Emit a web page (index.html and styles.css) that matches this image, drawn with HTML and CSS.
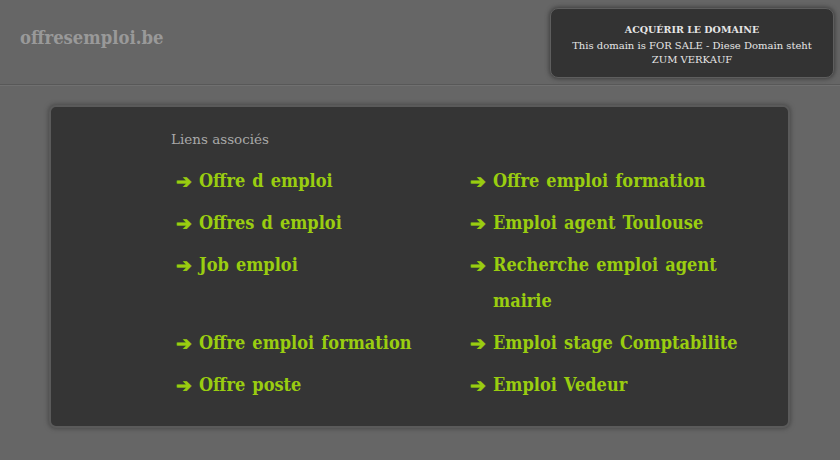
FILE: index.html
```html
<!DOCTYPE html>
<html lang="fr">
<head>
<meta charset="utf-8">
<title>offresemploi.be</title>
<link rel="stylesheet" href="styles.css">
</head>
<body>
<header class="top">
  <div class="brand">offresemploi.be</div>
  <div class="sale">
    <div class="sale-title">ACQUÉRIR LE DOMAINE</div>
    <div class="sale-text">This domain is FOR SALE - Diese Domain steht ZUM VERKAUF</div>
  </div>
</header>
<main class="panel">
  <div class="panel-title">Liens associés</div>
  <ul class="links">
    <li><span class="arr">➔</span><a href="#">Offre d emploi</a></li>
    <li><span class="arr">➔</span><a href="#">Offre emploi formation</a></li>
    <li><span class="arr">➔</span><a href="#">Offres d emploi</a></li>
    <li><span class="arr">➔</span><a href="#">Emploi agent Toulouse</a></li>
    <li><span class="arr">➔</span><a href="#">Job emploi</a></li>
    <li><span class="arr">➔</span><a href="#">Recherche emploi agent mairie</a></li>
    <li><span class="arr">➔</span><a href="#">Offre emploi formation</a></li>
    <li><span class="arr">➔</span><a href="#">Emploi stage Comptabilite</a></li>
    <li><span class="arr">➔</span><a href="#">Offre poste</a></li>
    <li><span class="arr">➔</span><a href="#">Emploi Vedeur</a></li>
  </ul>
</main>
</body>
</html>
```
FILE: styles.css
```css
html, body {
  margin: 0;
  padding: 0;
}
body {
  background: #666666;
  font-family: "DejaVu Serif", "Liberation Serif", serif;
  width: 840px;
  height: 460px;
  overflow: hidden;
}
.top {
  height: 85px;
  border-bottom: 1px solid #585858;
  box-shadow: 0 1px 0 #707070;
  display: flex;
  justify-content: space-between;
  align-items: flex-start;
  box-sizing: border-box;
}
.brand {
  margin: 26px 0 0 20px;
  font-family: "DejaVu Serif Condensed", "DejaVu Serif", serif;
  font-size: 18.3px;
  font-weight: bold;
  color: #999999;
  line-height: 24px;
}
.sale {
  margin: 8px 6px 0 0;
  width: 284px;
  height: 70px;
  box-sizing: border-box;
  background: #333333;
  border: 1px solid #5e5e5e;
  border-radius: 8px;
  box-shadow: 0 0 4px 1px #3e3e3e;
  color: #e6e6e6;
  text-align: center;
  padding: 13px 10px 0;
}
.sale-title {
  font-size: 9.5px;
  font-weight: bold;
  line-height: 15px;
  margin-bottom: 2px;
}
.sale-text {
  font-size: 10px;
  line-height: 14px;
}
.panel {
  margin: 20px 0 0 49px;
  width: 741px;
  height: 323px;
  box-sizing: border-box;
  background: #353535;
  border: 2px solid #5a5a5a;
  border-radius: 7px;
  box-shadow: 0 0 4px 1px #4a4a4a;
  padding: 22px 0 0 120px;
}
.panel-title {
  font-size: 13.5px;
  line-height: 20px;
  color: #a8a8a8;
  margin-bottom: 14px;
}
.links {
  list-style: none;
  margin: 0;
  padding: 0 0 0 5px;
  display: grid;
  grid-template-columns: 294px 294px;
  row-gap: 6px;
}
.links li {
  display: flex;
  align-items: flex-start;
  line-height: 36px;
}
.arr {
  font-family: "DejaVu Sans", sans-serif;
  font-size: 19px;
  font-weight: bold;
  color: #9acd10;
  -webkit-text-stroke: 0.7px #9acd10;
  width: 23px;
  flex: none;
}
.links a {
  color: #9acd10;
  text-decoration: none;
  font-family: "DejaVu Serif Condensed", "DejaVu Serif", serif;
  font-size: 18px;
  font-weight: bold;
  word-spacing: 1.5px;
  width: 262px;
}
```
